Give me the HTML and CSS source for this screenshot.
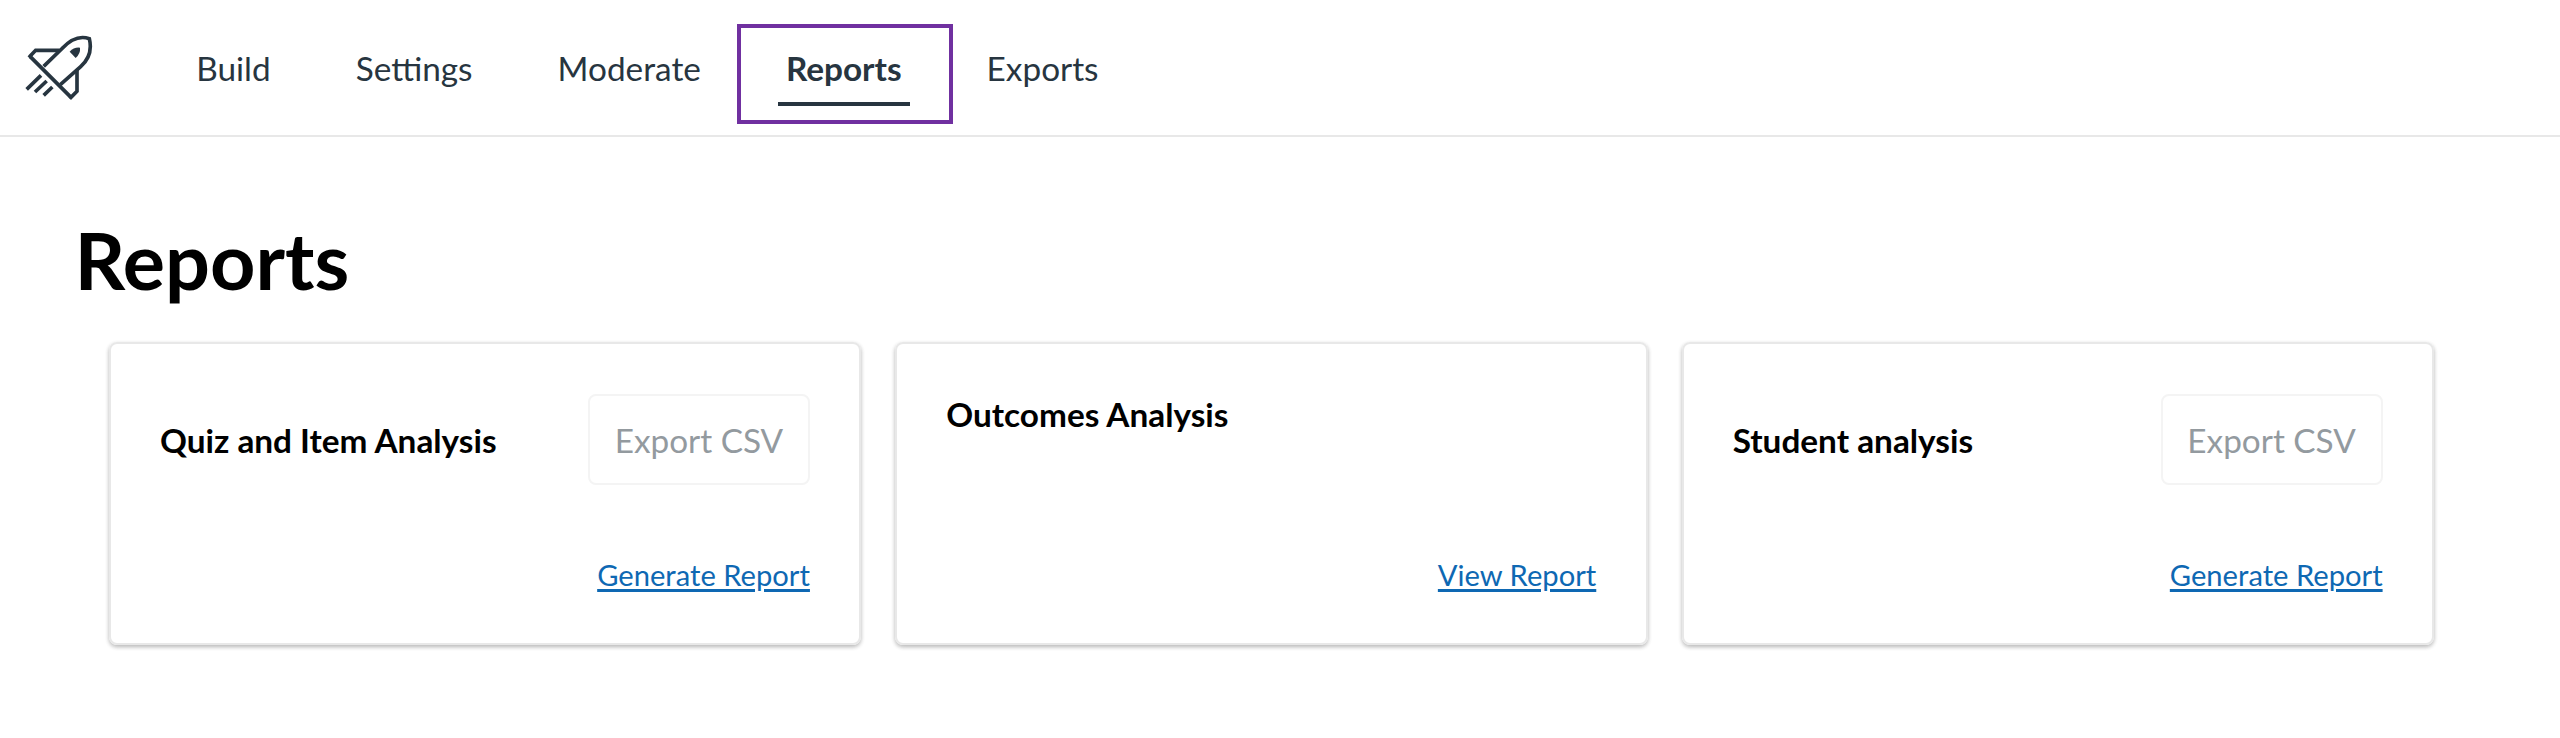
FILE: index.html
```html
<!DOCTYPE html>
<html lang="en">
<head>
  <meta charset="UTF-8">
  <meta name="viewport" content="width=device-width, initial-scale=1.0">
  <title>Reports</title>
  <link rel="stylesheet" href="styles.css">
</head>
<body>
  <header class="topbar">
    <svg class="logo" viewBox="75 107 204 195" fill="none" stroke="currentColor" stroke-width="11">
      <path d="M90 171 L213 294"/>
      <path d="M131 201 L187 147 C211 121 239 108 268 118 C275 147 269 178 242 202 L181 256"/>
      <path d="M86.500 174.500 L90 171 L107 153 H178"/>
      <path d="M231 210 V276 L213 294 L209.500 290.500"/>
      <path d="M80 270 L123 228 M105 278 L140 245 M131 288 L157 263"/>
      <path d="M209 157 Q222 143 240 145 Q242 162 227 176 Z" fill="currentColor" stroke="none"/>
    </svg>
    <nav class="tabs">
      <a class="tab">Build</a>
      <a class="tab">Settings</a>
      <a class="tab">Moderate</a>
      <a class="tab active">Reports</a>
      <a class="tab">Exports</a>
    </nav>
  </header>

  <main class="page">
    <h1>Reports</h1>
    <div class="cards">
      <section class="card">
        <div class="card-top">
          <h2>Quiz and Item Analysis</h2>
          <button class="export" disabled>Export CSV</button>
        </div>
        <a class="link">Generate Report</a>
      </section>
      <section class="card">
        <div class="card-top">
          <h2>Outcomes Analysis</h2>
        </div>
        <a class="link">View Report</a>
      </section>
      <section class="card">
        <div class="card-top">
          <h2>Student analysis</h2>
          <button class="export" disabled>Export CSV</button>
        </div>
        <a class="link">Generate Report</a>
      </section>
    </div>
  </main>
</body>
</html>
```
FILE: styles.css
```css
* {
  box-sizing: border-box;
}
body {
  margin: 0;
  min-height: 100vh;
  background: #fff;
  color: #000;
  font-family: Lato, sans-serif;
  font-size: 33.33px;
}
.topbar {
  display: flex;
  align-items: center;
  height: 137px;
  padding-left: 25px;
  border-bottom: 2px solid #e8e8e8;
  color: #273540;
}
.logo {
  width: 68px;
  height: 65px;
}
.tabs {
  display: flex;
  gap: 68.4px;
  margin-left: 95px;
}
.tab {
  position: relative;
  padding: 0 8.33px;
  line-height: 50px;
}
.tab.active {
  font-weight: bold;
}
/* underline of the current tab */
.tab.active::before {
  content: "";
  position: absolute;
  left: 0;
  right: 0;
  top: 59px;
  height: 4px;
  background: #273540;
}
/* highlight frame */
.tab.active::after {
  content: "";
  box-sizing: border-box;
  position: absolute;
  left: -41px;
  top: -18.5px;
  width: 216px;
  height: 100px;
  border: 4px solid #7030a0;
}
.page {
  padding: 74px 126px 92px 74.5px;
}
h1 {
  margin: 0;
  font-size: 79.17px;
  line-height: 98px;
}
.cards {
  display: grid;
  grid-template-columns: repeat(3, 1fr);
  gap: 34px;
  margin: 33px 0 0 34.5px;
}
.card {
  display: flex;
  flex-direction: column;
  align-items: flex-end;
  justify-content: space-between;
  height: 303px;
  padding: 50px 49.4px 46.6px 49px;
  border: 2px solid #e8e8e8;
  border-radius: 8px;
  box-shadow: 0 2px 4px rgba(0, 0, 0, 0.2), 0 2px 4px rgba(0, 0, 0, 0.1);
}
.card-top {
  display: flex;
  align-items: center;
  justify-content: space-between;
  width: 100%;
}
h2 {
  margin: 0;
  font-size: 33.33px;
  line-height: 40px;
}
.export {
  width: 222px;
  height: 91px;
  padding: 0;
  background: #fff;
  border: 2px solid #f4f4f4;
  border-radius: 8px;
  color: #939a9f;
  font: inherit;
}
.link {
  color: #0e68b3;
  font-size: 29.17px;
  line-height: 42px;
  text-decoration: underline;
  text-decoration-thickness: 3px;
  text-underline-offset: 3px;
}
```
